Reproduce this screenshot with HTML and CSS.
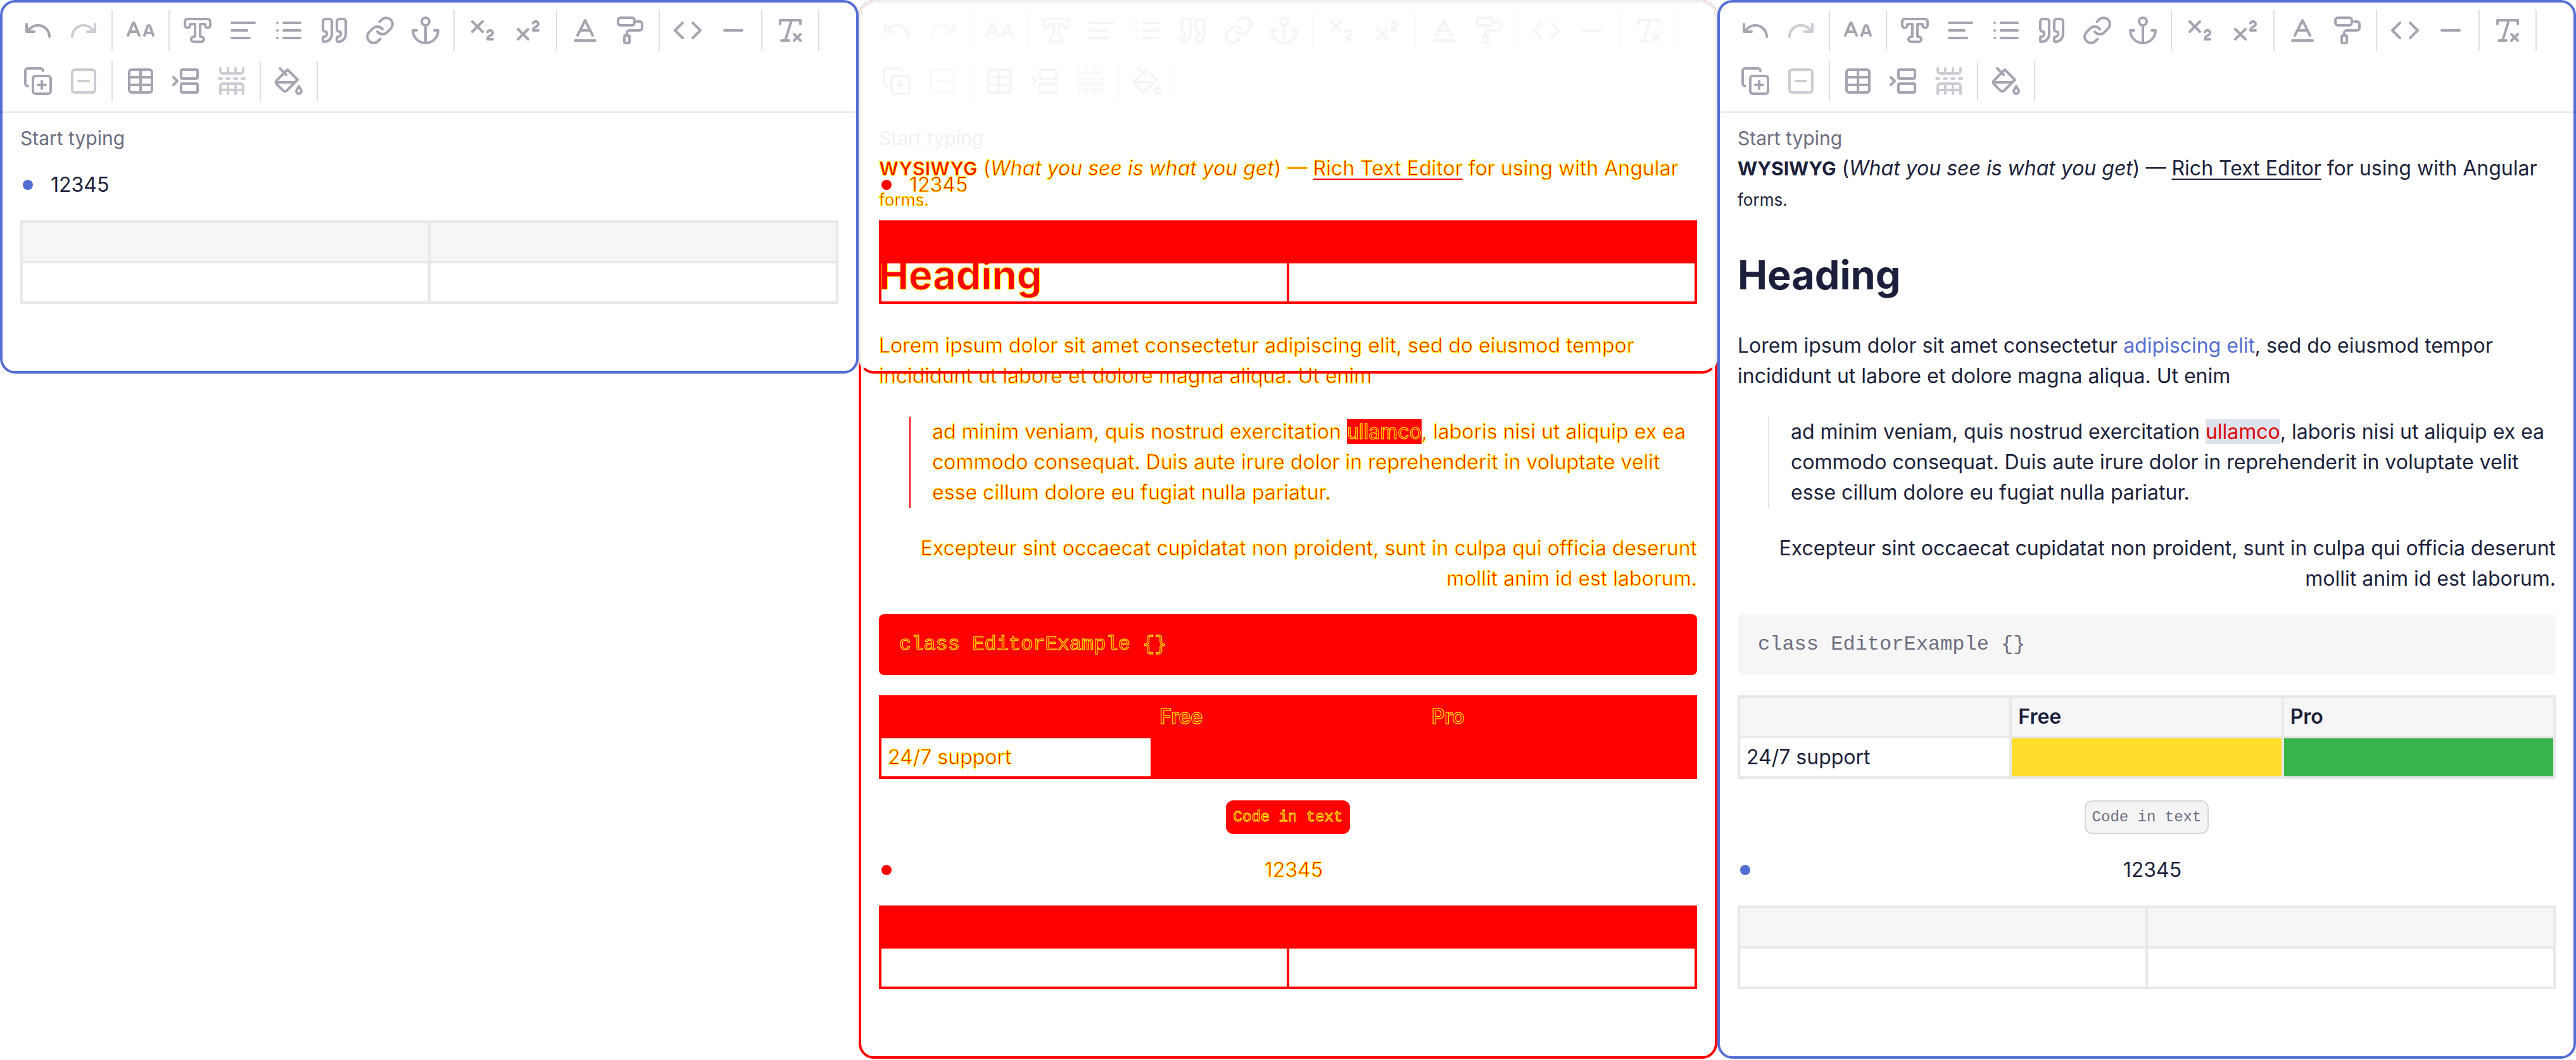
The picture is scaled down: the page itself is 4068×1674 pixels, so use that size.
FILE: index.html
```html
<!DOCTYPE html>
<html lang="en">
<head>
<meta charset="utf-8">
<meta name="viewport" content="width=device-width, initial-scale=1">
<title>Editor comparison</title>
<link rel="stylesheet" href="styles.css">
</head>
<body>
<svg class="sprite" aria-hidden="true">
  <symbol id="undo" viewBox="0 0 24 24"><path d="M3 7v6h6M21 17a9 9 0 0 0-9-9 9 9 0 0 0-6 2.3L3 13"/></symbol>
  <symbol id="redo" viewBox="0 0 24 24"><path d="M21 7v6h-6M3 17a9 9 0 0 1 9-9 9 9 0 0 1 6 2.3l3 2.7"/></symbol>
  <symbol id="size" viewBox="0 0 24 24"><path d="m15 16 2.536-7.328a1.02 1.02 1 0 1 1.928 0L22 16M15.697 14h5.606M2 16l4.039-9.69a.5.5 0 0 1 .923 0L11 16M3.304 13h6.392"/></symbol>
  <symbol id="type" viewBox="0 0 24 24"><path d="M14 16.5a.5.5 0 0 0 .5.5h.5a2 2 0 0 1 0 4H9a2 2 0 0 1 0-4h.5a.5.5 0 0 0 .5-.5v-9a.5.5 0 0 0-.5-.5h-3a.5.5 0 0 0-.5.5V8a2 2 0 0 1-4 0V5a2 2 0 0 1 2-2h16a2 2 0 0 1 2 2v3a2 2 0 0 1-4 0v-.5a.5.5 0 0 0-.5-.5h-3a.5.5 0 0 0-.5.5Z"/></symbol>
  <symbol id="align" viewBox="0 0 24 24"><path d="M3 6h18M3 12h12M3 18h14"/></symbol>
  <symbol id="list" viewBox="0 0 24 24"><path d="M8 6h13M8 12h13M8 18h13M3 6h.01M3 12h.01M3 18h.01"/></symbol>
  <symbol id="quote" viewBox="0 0 24 24"><path d="M16 3a2 2 0 0 0-2 2v6a2 2 0 0 0 2 2 1 1 0 0 1 1 1v1a2 2 0 0 1-2 2 1 1 0 0 0-1 1v2a1 1 0 0 0 1 1 6 6 0 0 0 6-6V5a2 2 0 0 0-2-2zM5 3a2 2 0 0 0-2 2v6a2 2 0 0 0 2 2 1 1 0 0 1 1 1v1a2 2 0 0 1-2 2 1 1 0 0 0-1 1v2a1 1 0 0 0 1 1 6 6 0 0 0 6-6V5a2 2 0 0 0-2-2z"/></symbol>
  <symbol id="link" viewBox="0 0 24 24"><path d="M10 13a5 5 0 0 0 7.54.54l3-3a5 5 0 0 0-7.07-7.07l-1.72 1.71M14 11a5 5 0 0 0-7.54-.54l-3 3a5 5 0 0 0 7.07 7.07l1.71-1.71"/></symbol>
  <symbol id="anchor" viewBox="0 0 24 24"><path d="M12 22V8M5 12H2a10 10 0 0 0 20 0h-3"/><circle cx="12" cy="5" r="3"/></symbol>
  <symbol id="sub" viewBox="0 0 24 24"><path d="m4 5 8 8M12 5l-8 8M20 19h-4c0-1.5.44-2 1.5-2.5S20 15.33 20 14c0-.47-.17-.93-.48-1.29a2.11 2.11 0 0 0-2.62-.44c-.42.24-.74.62-.9 1.07"/></symbol>
  <symbol id="sup" viewBox="0 0 24 24"><path d="m4 19 8-8M12 19l-8-8M20 12h-4c0-1.5.442-2 1.5-2.5S20 8.334 20 7.002c0-.472-.17-.93-.484-1.29a2.105 2.105 0 0 0-2.617-.436c-.42.239-.738.614-.899 1.06"/></symbol>
  <symbol id="color" viewBox="0 0 24 24"><path d="M4 20h16M6 16l6-12 6 12M8 12h8"/></symbol>
  <symbol id="roller" viewBox="0 0 24 24"><rect width="13" height="6" x="2" y="2" rx="2"/><path d="M8 16v-2a2 2 0 0 1 2-2h8a2 2 0 0 0 2-2V7a2 2 0 0 0-2-2h-2" transform="translate(1)"/><rect width="4" height="6" x="7" y="16" rx="1"/></symbol>
  <symbol id="code" viewBox="0 0 24 24"><path d="m16 18 6-6-6-6M8 6l-6 6 6 6"/></symbol>
  <symbol id="rule" viewBox="0 0 24 24"><path d="M5 12h14"/></symbol>
  <symbol id="clear" viewBox="0 0 24 24"><path d="M4 7V4h16v3M5 20h6M13 4 8 20M15 15l5 5M20 15l-5 5"/></symbol>
  <symbol id="add" viewBox="0 0 24 24"><path d="M15 12v6M12 15h6M4 16c-1.1 0-2-.9-2-2V4c0-1.1.9-2 2-2h10c1.1 0 2 .9 2 2"/><rect width="14" height="14" x="8" y="8" rx="2"/></symbol>
  <symbol id="remove" viewBox="0 0 24 24"><rect width="18" height="18" x="3" y="3" rx="2"/><path d="M8 12h8"/></symbol>
  <symbol id="table" viewBox="0 0 24 24"><rect width="18" height="18" x="3" y="3" rx="2"/><path d="M12 3v18M3 9h18M3 15h18"/></symbol>
  <symbol id="merge" viewBox="0 0 24 24"><rect width="13" height="7" x="8" y="3" rx="1"/><path d="m2 9 3 3-3 3"/><rect width="13" height="7" x="8" y="14" rx="1"/></symbol>
  <symbol id="split" viewBox="0 0 24 24"><path d="M14 10h2M15 22v-8M15 2v4M2 10h2M20 10h2M3 19h18M3 22v-6a2 2 135 0 1 2-2h14a2 2 45 0 1 2 2v6M3 2v2a2 2 45 0 0 2 2h14a2 2 135 0 0 2-2V2M8 10h2M9 22v-8M9 2v4"/></symbol>
  <symbol id="fill" viewBox="0 0 24 24"><path d="m19 11-8-8-8.6 8.6a2 2 0 0 0 0 2.8l5.2 5.2c.8.8 2 .8 2.8 0L19 11ZM5 2l5 5M2 13h15M22 20a2 2 0 1 1-4 0c0-1.6 1.7-2.4 2-4 .3 1.6 2 2.4 2 4Z"/></symbol>
</svg>

<main class="columns">
  <section class="editor" aria-label="Short document">
    <div class="toolbar" role="toolbar" aria-label="Formatting">
      <div class="group">
        <button class="tool" type="button" aria-label="Undo"><svg><use href="#undo"/></svg></button>
        <button class="tool" type="button" aria-label="Redo" disabled><svg><use href="#redo"/></svg></button>
      </div>
      <div class="group">
        <button class="tool" type="button" aria-label="Font size"><svg><use href="#size"/></svg></button>
      </div>
      <div class="group">
        <button class="tool" type="button" aria-label="Font style"><svg><use href="#type"/></svg></button>
        <button class="tool" type="button" aria-label="Align"><svg><use href="#align"/></svg></button>
        <button class="tool" type="button" aria-label="List"><svg><use href="#list"/></svg></button>
        <button class="tool" type="button" aria-label="Quote"><svg><use href="#quote"/></svg></button>
        <button class="tool" type="button" aria-label="Link"><svg><use href="#link"/></svg></button>
        <button class="tool" type="button" aria-label="Anchor"><svg><use href="#anchor"/></svg></button>
      </div>
      <div class="group">
        <button class="tool" type="button" aria-label="Subscript"><svg><use href="#sub"/></svg></button>
        <button class="tool" type="button" aria-label="Superscript"><svg><use href="#sup"/></svg></button>
      </div>
      <div class="group">
        <button class="tool" type="button" aria-label="Text color"><svg><use href="#color"/></svg></button>
        <button class="tool" type="button" aria-label="Highlight"><svg><use href="#roller"/></svg></button>
      </div>
      <div class="group">
        <button class="tool" type="button" aria-label="Code"><svg><use href="#code"/></svg></button>
        <button class="tool" type="button" aria-label="Horizontal rule"><svg><use href="#rule"/></svg></button>
      </div>
      <div class="group">
        <button class="tool" type="button" aria-label="Clear format"><svg><use href="#clear"/></svg></button>
      </div>
      <div class="group">
        <button class="tool" type="button" aria-label="Add block"><svg><use href="#add"/></svg></button>
        <button class="tool" type="button" aria-label="Remove block" disabled><svg><use href="#remove"/></svg></button>
      </div>
      <div class="group">
        <button class="tool" type="button" aria-label="Table"><svg><use href="#table"/></svg></button>
        <button class="tool" type="button" aria-label="Merge cells"><svg><use href="#merge"/></svg></button>
        <button class="tool" type="button" aria-label="Split cells" disabled><svg><use href="#split"/></svg></button>
      </div>
      <div class="group">
        <button class="tool" type="button" aria-label="Cell color"><svg><use href="#fill"/></svg></button>
      </div>
    </div>
    <div class="content">
      <div class="label">Start typing</div>
      <ul class="list list-first"><li>12345</li></ul>
      <table class="grid"><tr><th></th><th></th></tr><tr><td></td><td></td></tr></table>
    </div>
  </section>

  <section class="diff" aria-label="Difference">
    <div class="editor layer-full">
      <div class="toolbar" role="toolbar" aria-label="Formatting">
        <div class="group">
          <button class="tool" type="button" aria-label="Undo"><svg><use href="#undo"/></svg></button>
          <button class="tool" type="button" aria-label="Redo" disabled><svg><use href="#redo"/></svg></button>
        </div>
        <div class="group">
          <button class="tool" type="button" aria-label="Font size"><svg><use href="#size"/></svg></button>
        </div>
        <div class="group">
          <button class="tool" type="button" aria-label="Font style"><svg><use href="#type"/></svg></button>
          <button class="tool" type="button" aria-label="Align"><svg><use href="#align"/></svg></button>
          <button class="tool" type="button" aria-label="List"><svg><use href="#list"/></svg></button>
          <button class="tool" type="button" aria-label="Quote"><svg><use href="#quote"/></svg></button>
          <button class="tool" type="button" aria-label="Link"><svg><use href="#link"/></svg></button>
          <button class="tool" type="button" aria-label="Anchor"><svg><use href="#anchor"/></svg></button>
        </div>
        <div class="group">
          <button class="tool" type="button" aria-label="Subscript"><svg><use href="#sub"/></svg></button>
          <button class="tool" type="button" aria-label="Superscript"><svg><use href="#sup"/></svg></button>
        </div>
        <div class="group">
          <button class="tool" type="button" aria-label="Text color"><svg><use href="#color"/></svg></button>
          <button class="tool" type="button" aria-label="Highlight"><svg><use href="#roller"/></svg></button>
        </div>
        <div class="group">
          <button class="tool" type="button" aria-label="Code"><svg><use href="#code"/></svg></button>
          <button class="tool" type="button" aria-label="Horizontal rule"><svg><use href="#rule"/></svg></button>
        </div>
        <div class="group">
          <button class="tool" type="button" aria-label="Clear format"><svg><use href="#clear"/></svg></button>
        </div>
        <div class="group">
          <button class="tool" type="button" aria-label="Add block"><svg><use href="#add"/></svg></button>
          <button class="tool" type="button" aria-label="Remove block" disabled><svg><use href="#remove"/></svg></button>
        </div>
        <div class="group">
          <button class="tool" type="button" aria-label="Table"><svg><use href="#table"/></svg></button>
          <button class="tool" type="button" aria-label="Merge cells"><svg><use href="#merge"/></svg></button>
          <button class="tool" type="button" aria-label="Split cells" disabled><svg><use href="#split"/></svg></button>
        </div>
        <div class="group">
          <button class="tool" type="button" aria-label="Cell color"><svg><use href="#fill"/></svg></button>
        </div>
      </div>
      <div class="content">
        <div class="label">Start typing</div>
        <p><b>WYSIWYG</b> (<i>What you see is what you get</i>) — <u>Rich Text Editor</u> for using with Angular <small>forms.</small></p>
        <h1>Heading</h1>
        <p>Lorem ipsum dolor sit amet consectetur <a href="#">adipiscing elit</a>, sed do eiusmod tempor incididunt ut labore et dolore magna aliqua. Ut enim</p>
        <blockquote>ad minim veniam, quis nostrud exercitation <mark>ullamco</mark>, laboris nisi ut aliquip ex ea commodo consequat. Duis aute irure dolor in reprehenderit in voluptate velit esse cillum dolore eu fugiat nulla pariatur.</blockquote>
        <p class="right">Excepteur sint occaecat cupidatat non proident, sunt in culpa qui officia deserunt mollit anim id est laborum.</p>
        <pre>class EditorExample {}</pre>
        <table class="grid"><tr><th></th><th>Free</th><th>Pro</th></tr><tr><td>24/7 support</td><td class="yellow"></td><td class="green"></td></tr></table>
        <p class="center"><code>Code in text</code></p>
        <ul class="list list-center"><li>12345</li></ul>
        <table class="grid"><tr><th></th><th></th></tr><tr><td></td><td></td></tr></table>
      </div>
    </div>
    <div class="editor layer-short">
      <div class="content">
        <ul class="list list-first"><li>12345</li></ul>
        <table class="grid"><tr><th></th><th></th></tr><tr><td></td><td></td></tr></table>
      </div>
    </div>
  </section>

  <section class="editor" aria-label="Full document">
    <div class="toolbar" role="toolbar" aria-label="Formatting">
      <div class="group">
        <button class="tool" type="button" aria-label="Undo"><svg><use href="#undo"/></svg></button>
        <button class="tool" type="button" aria-label="Redo" disabled><svg><use href="#redo"/></svg></button>
      </div>
      <div class="group">
        <button class="tool" type="button" aria-label="Font size"><svg><use href="#size"/></svg></button>
      </div>
      <div class="group">
        <button class="tool" type="button" aria-label="Font style"><svg><use href="#type"/></svg></button>
        <button class="tool" type="button" aria-label="Align"><svg><use href="#align"/></svg></button>
        <button class="tool" type="button" aria-label="List"><svg><use href="#list"/></svg></button>
        <button class="tool" type="button" aria-label="Quote"><svg><use href="#quote"/></svg></button>
        <button class="tool" type="button" aria-label="Link"><svg><use href="#link"/></svg></button>
        <button class="tool" type="button" aria-label="Anchor"><svg><use href="#anchor"/></svg></button>
      </div>
      <div class="group">
        <button class="tool" type="button" aria-label="Subscript"><svg><use href="#sub"/></svg></button>
        <button class="tool" type="button" aria-label="Superscript"><svg><use href="#sup"/></svg></button>
      </div>
      <div class="group">
        <button class="tool" type="button" aria-label="Text color"><svg><use href="#color"/></svg></button>
        <button class="tool" type="button" aria-label="Highlight"><svg><use href="#roller"/></svg></button>
      </div>
      <div class="group">
        <button class="tool" type="button" aria-label="Code"><svg><use href="#code"/></svg></button>
        <button class="tool" type="button" aria-label="Horizontal rule"><svg><use href="#rule"/></svg></button>
      </div>
      <div class="group">
        <button class="tool" type="button" aria-label="Clear format"><svg><use href="#clear"/></svg></button>
      </div>
      <div class="group">
        <button class="tool" type="button" aria-label="Add block"><svg><use href="#add"/></svg></button>
        <button class="tool" type="button" aria-label="Remove block" disabled><svg><use href="#remove"/></svg></button>
      </div>
      <div class="group">
        <button class="tool" type="button" aria-label="Table"><svg><use href="#table"/></svg></button>
        <button class="tool" type="button" aria-label="Merge cells"><svg><use href="#merge"/></svg></button>
        <button class="tool" type="button" aria-label="Split cells" disabled><svg><use href="#split"/></svg></button>
      </div>
      <div class="group">
        <button class="tool" type="button" aria-label="Cell color"><svg><use href="#fill"/></svg></button>
      </div>
    </div>
    <div class="content">
      <div class="label">Start typing</div>
      <p><b>WYSIWYG</b> (<i>What you see is what you get</i>) — <u>Rich Text Editor</u> for using with Angular <small>forms.</small></p>
      <h1>Heading</h1>
      <p>Lorem ipsum dolor sit amet consectetur <a href="#">adipiscing elit</a>, sed do eiusmod tempor incididunt ut labore et dolore magna aliqua. Ut enim</p>
      <blockquote>ad minim veniam, quis nostrud exercitation <mark>ullamco</mark>, laboris nisi ut aliquip ex ea commodo consequat. Duis aute irure dolor in reprehenderit in voluptate velit esse cillum dolore eu fugiat nulla pariatur.</blockquote>
      <p class="right">Excepteur sint occaecat cupidatat non proident, sunt in culpa qui officia deserunt mollit anim id est laborum.</p>
      <pre>class EditorExample {}</pre>
      <table class="grid"><tr><th></th><th>Free</th><th>Pro</th></tr><tr><td>24/7 support</td><td class="yellow"></td><td class="green"></td></tr></table>
      <p class="center"><code>Code in text</code></p>
      <ul class="list list-center"><li>12345</li></ul>
      <table class="grid"><tr><th></th><th></th></tr><tr><td></td><td></td></tr></table>
    </div>
  </section>
</main>
</body>
</html>
```

FILE: styles.css
```css
* { box-sizing: border-box; }

body {
  margin: 0;
  background: #fff;
  color: #1b1f3b;
  font: 32px/48px Inter, "Liberation Sans", sans-serif;
}

.sprite { display: none; }

.columns {
  display: grid;
  grid-template-columns: repeat(3, minmax(0, 1fr));
  align-items: start;
}

.editor {
  border: 4px solid #526ed3;
  border-radius: 24px;
}

/* Toolbar */
.toolbar {
  display: flex;
  flex-wrap: wrap;
  row-gap: 16px;
  margin: -4px;
  padding: 16px;
  border-bottom: 2px solid rgba(0, 0, 0, .1);
}
.group {
  display: flex;
  gap: 8px;
  padding: 0 12px;
  border-right: 2px solid #dfdfdf;
}
.tool {
  display: flex;
  align-items: center;
  justify-content: center;
  width: 64px;
  height: 64px;
  padding: 0;
  border: 0;
  background: none;
  color: #a4a5b1;
}
.tool:disabled { color: #cccdd3; }
.tool svg {
  width: 48px;
  height: 48px;
  fill: none;
  stroke: currentColor;
  stroke-width: 2;
  stroke-linecap: round;
  stroke-linejoin: round;
}

/* Document */
.content { padding: 20px 28px 106px; }
.label {
  color: #6b6d80;
  font-size: 30px;
}
p { margin: 0; }
b { font-size: 30px; line-height: 1; font-weight: 700; }
th { font-weight: 600; }
small { font-size: 26px; line-height: 1; }
u { text-underline-offset: 5px; text-decoration-thickness: 2px; }
a { color: #526ed3; text-decoration: none; }
h1 {
  margin: 56px 0 48px;
  font-size: 63px;
  line-height: 80px;
  font-weight: 700;
}
blockquote {
  margin: 40px 0 40px 48px;
  padding-left: 34px;
  border-left: 2px solid #e4e4e4;
}
mark { background: #dde3ed; color: #d00; }
.right { text-align: right; }
.center { text-align: center; }
pre {
  margin: 32px 0;
  padding: 24px 32px;
  border-radius: 8px;
  background: #f6f6f6;
  color: #6b6d80;
  font: 32px/48px "Liberation Mono", monospace;
}
code {
  padding: 11px 10px;
  border: 2px solid #d6d6d6;
  border-radius: 12px;
  background: #f4f4f4;
  color: #6b6d80;
  font: 24px/24px "Liberation Mono", monospace;
}

.list {
  margin: 40px 0 32px;
  padding: 0;
  list-style: none;
}
.list-first { margin-top: 26px; }
.list li {
  position: relative;
  padding-left: 48px;
}
.list-center li {
  padding-left: 18px;
  text-align: center;
}
.list li::before {
  content: "";
  position: absolute;
  top: 16px;
  left: 4px;
  width: 16px;
  height: 16px;
  border-radius: 50%;
  background: #526ed3;
}

.grid {
  width: 100%;
  margin: 32px 0;
  table-layout: fixed;
  border-collapse: collapse;
}
.grid:last-child { margin-bottom: 0; }
.grid th, .grid td {
  height: 64px;
  padding: 0 10px;
  border: 4px solid #e8e8e7;
  text-align: left;
}
.grid th { background: #f6f6f6; }
.grid .yellow { background: #ffdd2b; }
.grid .green { background: #3ab54b; }

/* Difference: both documents laid over each other in one cell */
.diff { display: grid; align-items: start; }
.diff .editor { grid-area: 1 / 1; }
.layer-full { border-color: #f00; }
.layer-short {
  padding-top: 238px;
  border-color: #f0f0f0 #f0f0f0 #f00;
  pointer-events: none;
}
.layer-short .content { padding-top: 0; }
.diff .toolbar { border-color: #fafafa; }
.diff .group { border-color: #fafafa; }
.diff .tool { color: #f5f5f5; }
.diff .tool:disabled { color: #f9f9f9; }
.diff .content {
  color: #f00;
  -webkit-text-stroke: 1px #ff0;
}
.diff .label { color: #f1f1f1; -webkit-text-stroke: 0; }
.diff a { color: #f00; }
.diff u { text-decoration-color: #f00; }
.diff blockquote { border-color: #f00; }
.diff mark, .diff pre, .diff code { background: #f00; color: #f00; }
.diff code { border-color: #f00; }
.diff .grid th, .diff .grid td { border-color: #f00; }
.diff .grid th, .diff .grid .yellow, .diff .grid .green { background: #f00; }
.diff .list li::before { background: #f00; }
```
